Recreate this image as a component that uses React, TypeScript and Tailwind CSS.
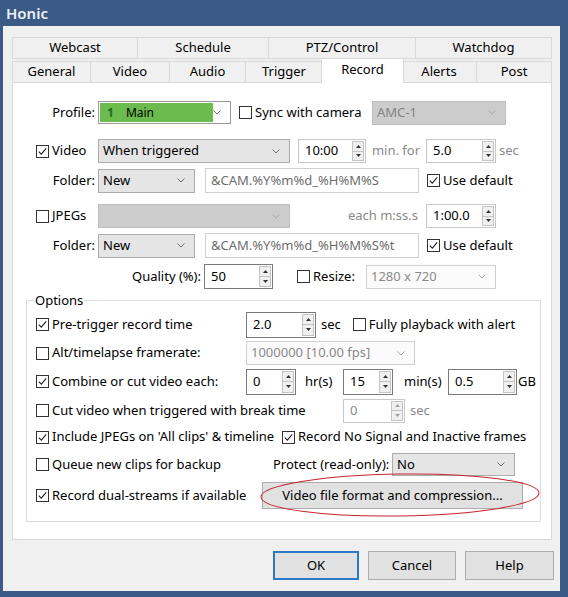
import React from 'react';

type Kind = 'normal' | 'disabled' | 'light';

const Check = ({ checked, label, className = '' }: { checked?: boolean; label: string; className?: string }) => (
    <div className={`flex items-center whitespace-nowrap ${className}`}>
        <svg width="13" height="13" viewBox="0 0 13 13" className="shrink-0">
            <rect x="0.5" y="0.5" width="12" height="12" fill="#fff" stroke="#333" />
            {checked && <path d="M2.8 6.6 L5.3 9.2 L10.2 3.4" fill="none" stroke="#222" strokeWidth="1.1" />}
        </svg>
        <span className="ml-[3px]">{label}</span>
    </div>
);

const Chevron = ({ color = '#707070' }: { color?: string }) => (
    <svg width="8" height="5" viewBox="0 0 8 5" className="shrink-0">
        <path d="M0.5 0.5 L4 4 L7.5 0.5" fill="none" stroke={color} strokeWidth="1" />
    </svg>
);

const Combo = ({ value, w, kind = 'normal', h = 'h-[24px]' }: { value: string; w: string; kind?: Kind; h?: string }) => {
    const styles: Record<Kind, string> = {
        normal: 'bg-[#e5e5e5] border-[#acacac] text-black',
        disabled: 'bg-[#cccccc] border-[#bfbfbf] text-[#838383]',
        light: 'bg-[#fbfbfb] border-[#cfcfcf] text-[#8a8a8a]',
    };
    return (
        <div className={`${w} ${h} ${styles[kind]} border flex items-center pl-[4px] pr-[9px] shrink-0`}>
            <span className="flex-1 whitespace-nowrap">{value}</span>
            <Chevron color={kind === 'normal' ? '#707070' : '#a8a8a8'} />
        </div>
    );
};

const Tri = ({ up, color }: { up?: boolean; color: string }) => (
    <svg width="5" height="3" viewBox="0 0 5 3">
        <path d={up ? 'M0 3 L2.5 0 L5 3 Z' : 'M0 0 L2.5 3 L5 0 Z'} fill={color} />
    </svg>
);

const Spin = ({ value, w, dark, disabled, h = 'h-[24px]' }: { value: string; w: string; dark?: boolean; disabled?: boolean; h?: string }) => (
    <div
        className={`${w} ${h} bg-white border flex shrink-0 ${dark ? 'border-[#7a7a7a]' : 'border-[#c8c8c8]'} ${disabled ? 'text-[#8a8a8a]' : 'text-black'}`}
    >
        <div className="flex-1 flex items-center pl-[6px]">{value}</div>
        <div className="w-[13px] flex flex-col py-[1px] pr-[1px]">
            <div className="flex-1 border border-[#c4c4c4] bg-[#f0f0f0] flex items-center justify-center">
                <Tri up color={disabled ? '#a0a0a0' : '#333'} />
            </div>
            <div className="flex-1 border border-t-0 border-[#c4c4c4] bg-[#f0f0f0] flex items-center justify-center">
                <Tri color={disabled ? '#a0a0a0' : '#333'} />
            </div>
        </div>
    </div>
);

const Field = ({ value, w }: { value: string; w: string }) => (
    <div className={`${w} h-[25px] bg-white border border-[#cfcfcf] flex items-center pl-[5px] text-[#6d6d6d] shrink-0`}>
        {value}
    </div>
);

const Tab = ({ label, w, selected }: { label: string; w: string; selected?: boolean }) =>
    selected ? (
        <div className={`${w} h-[25px] -mx-[2px] relative z-10 bg-white border border-b-0 border-[#d9d9d9] flex items-start justify-center pt-[1px]`}>
            {label}
        </div>
    ) : (
        <div className={`${w} h-[22px] bg-[#f0f0f0] border border-l-0 first:border-l border-[#d9d9d9] flex items-center justify-center`}>
            {label}
        </div>
    );

const Button = ({ label, w, primary }: { label: string; w: string; primary?: boolean }) => (
    <div
        className={`${w} h-[29px] bg-[#e1e1e1] flex items-center justify-center ${primary ? 'border-2 border-[#2b79c7]' : 'border border-[#adadad]'}`}
    >
        {label}
    </div>
);

export default function App() {
    return (
        <div className="w-[568px] h-[597px] bg-[#3b5a85] font-['Noto_Sans',sans-serif] text-[13px] text-black overflow-hidden">
            <div className="h-[26px] flex items-center pl-[6px] text-[#eef2f7] text-[15px] font-semibold">Honic</div>
            <div className="ml-[3px] w-[557px] h-[565px] bg-[#f0f0f0] pt-[11px] pl-[9px]">
                {/* tabs */}
                <div className="w-[540px]">
                    <div className="flex">
                        <Tab label="Webcast" w="w-[126px]" />
                        <Tab label="Schedule" w="w-[131px]" />
                        <Tab label="PTZ/Control" w="w-[147px]" />
                        <Tab label="Watchdog" w="w-[136px]" />
                    </div>
                    <div className="flex items-end -mb-[1px] -mt-[1px]">
                        <Tab label="General" w="w-[79px]" />
                        <Tab label="Video" w="w-[79px]" />
                        <Tab label="Audio" w="w-[76px]" />
                        <Tab label="Trigger" w="w-[77px]" />
                        <Tab label="Record" w="w-[83px]" selected />
                        <Tab label="Alerts" w="w-[75px]" />
                        <Tab label="Post" w="w-[75px]" />
                    </div>
                    <div className="h-[458px] bg-white border border-[#d9d9d9]">
                        {/* profile */}
                        <div className="flex items-center h-[23px] mt-[18px]">
                            <div className="w-[85px] text-right pr-[3px]">Profile:</div>
                            <div className="w-[133px] h-[23px] border border-[#9a9a9a] bg-white flex items-center p-[1px] pr-[9px]">
                                <div className="w-[114px] h-full bg-[#6bbb4f] flex items-center pl-[7px] text-[12px]">
                                    <span className="text-[#1f6e1f] font-bold mr-[12px]">1</span>
                                    Main
                                </div>
                                <div className="flex-1" />
                                <Chevron />
                            </div>
                            <Check label="Sync with camera" className="w-[133px] ml-[8px]" />
                            <Combo value="AMC-1" w="w-[134px]" kind="disabled" />
                        </div>
                        {/* video */}
                        <div className="flex items-center h-[24px] mt-[15px]">
                            <div className="w-[85px] pl-[23px]">
                                <Check checked label="Video" />
                            </div>
                            <Combo value="When triggered" w="w-[192px]" />
                            <div className="ml-[8px]">
                                <Spin value="10:00" w="w-[68px]" />
                            </div>
                            <div className="w-[60px] text-center text-[#8a8a8a]">min. for</div>
                            <Spin value="5.0" w="w-[70px]" />
                            <div className="ml-[3px] text-[#8a8a8a]">sec</div>
                        </div>
                        {/* folder */}
                        <div className="flex items-center h-[25px] mt-[5px]">
                            <div className="w-[85px] text-right pr-[3px]">Folder:</div>
                            <Combo value="New" w="w-[97px]" />
                            <div className="ml-[10px]">
                                <Field value="&CAM.%Y%m%d_%H%M%S" w="w-[214px]" />
                            </div>
                            <Check checked label="Use default" className="ml-[8px]" />
                        </div>
                        {/* jpegs */}
                        <div className="flex items-center h-[24px] mt-[11px]">
                            <div className="w-[85px] pl-[23px]">
                                <Check label="JPEGs" />
                            </div>
                            <Combo value="" w="w-[192px]" kind="disabled" />
                            <div className="w-[136px] text-right pr-[8px] text-[#8a8a8a]">each m:ss.s</div>
                            <Spin value="1:00.0" w="w-[70px]" />
                        </div>
                        {/* folder 2 */}
                        <div className="flex items-center h-[25px] mt-[5px]">
                            <div className="w-[85px] text-right pr-[3px]">Folder:</div>
                            <Combo value="New" w="w-[97px]" />
                            <div className="ml-[10px]">
                                <Field value="&CAM.%Y%m%d_%H%M%S%t" w="w-[214px]" />
                            </div>
                            <Check checked label="Use default" className="ml-[8px]" />
                        </div>
                        {/* quality */}
                        <div className="flex items-center h-[25px] mt-[6px]">
                            <div className="w-[191px] text-right pr-[3px]">Quality (%):</div>
                            <Spin value="50" w="w-[69px]" dark h="h-[25px]" />
                            <Check label="Resize:" className="w-[69px] ml-[24px]" />
                            <Combo value="1280 x 720" w="w-[130px]" kind="light" />
                        </div>
                        {/* options */}
                        <div className="relative ml-[13px] mt-[11px] w-[515px] h-[222px] border border-[#dcdcdc]">
                            <div className="absolute -top-[11px] left-[7px] bg-white px-[1px] leading-[20px]">Options</div>
                            <div className="flex items-center h-[25px] mt-[11px]">
                                <div className="w-[219px] pl-[9px]">
                                    <Check checked label="Pre-trigger record time" />
                                </div>
                                <Spin value="2.0" w="w-[70px]" dark h="h-[26px]" />
                                <div className="ml-[5px]">sec</div>
                                <Check label="Fully playback with alert" className="ml-[12px]" />
                            </div>
                            <div className="flex items-center h-[24px] mt-[4px]">
                                <div className="w-[219px] pl-[9px]">
                                    <Check label="Alt/timelapse framerate:" />
                                </div>
                                <Combo value="1000000 [10.00 fps]" w="w-[169px]" kind="light" />
                            </div>
                            <div className="flex items-center h-[25px] mt-[4px]">
                                <div className="w-[219px] pl-[9px]">
                                    <Check checked label="Combine or cut video each:" />
                                </div>
                                <Spin value="0" w="w-[50px]" dark h="h-[26px]" />
                                <div className="w-[47px] pl-[9px]">hr(s)</div>
                                <Spin value="15" w="w-[50px]" dark h="h-[26px]" />
                                <div className="w-[55px] pl-[11px]">min(s)</div>
                                <Spin value="0.5" w="w-[69px]" dark h="h-[26px]" />
                                <div className="ml-[1px]">GB</div>
                            </div>
                            <div className="flex items-center h-[25px] mt-[4px]">
                                <div className="w-[316px] pl-[9px]">
                                    <Check label="Cut video when triggered with break time" />
                                </div>
                                <Spin value="0" w="w-[62px]" disabled />
                                <div className="ml-[5px] text-[#8a8a8a]">sec</div>
                            </div>
                            <div className="flex items-center h-[24px] mt-[2px]">
                                <div className="w-[255px] pl-[9px]">
                                    <Check checked label="Include JPEGs on 'All clips' & timeline" />
                                </div>
                                <Check checked label="Record No Signal and Inactive frames" />
                            </div>
                            <div className="flex items-center h-[23px] mt-[4px]">
                                <div className="w-[246px] pl-[9px]">
                                    <Check label="Queue new clips for backup" />
                                </div>
                                <div className="w-[119px]">Protect (read-only):</div>
                                <Combo value="No" w="w-[123px]" h="h-[23px]" />
                            </div>
                            <div className="relative flex items-center h-[27px] mt-[6px]">
                                <div className="w-[235px] pl-[9px]">
                                    <Check checked label="Record dual-streams if available" />
                                </div>
                                <div className="w-[261px] h-[27px] bg-[#e1e1e1] border border-[#adadad] flex items-center justify-center">
                                    Video file format and compression...
                                </div>
                                <svg
                                    className="absolute pointer-events-none left-[230px] -top-[9px]"
                                    width="286"
                                    height="48"
                                    viewBox="0 0 286 48"
                                >
                                    <ellipse
                                        cx="143"
                                        cy="22"
                                        rx="139"
                                        ry="21"
                                        fill="none"
                                        stroke="#c4262e"
                                        strokeWidth="1"
                                        transform="rotate(-0.8 143 22)"
                                    />
                                </svg>
                            </div>
                        </div>
                    </div>
                </div>
                {/* buttons */}
                <div className="flex mt-[11px] ml-[261px] gap-[9px]">
                    <Button label="OK" w="w-[86px]" primary />
                    <Button label="Cancel" w="w-[88px]" />
                    <Button label="Help" w="w-[89px]" />
                </div>
            </div>
        </div>
    );
}
